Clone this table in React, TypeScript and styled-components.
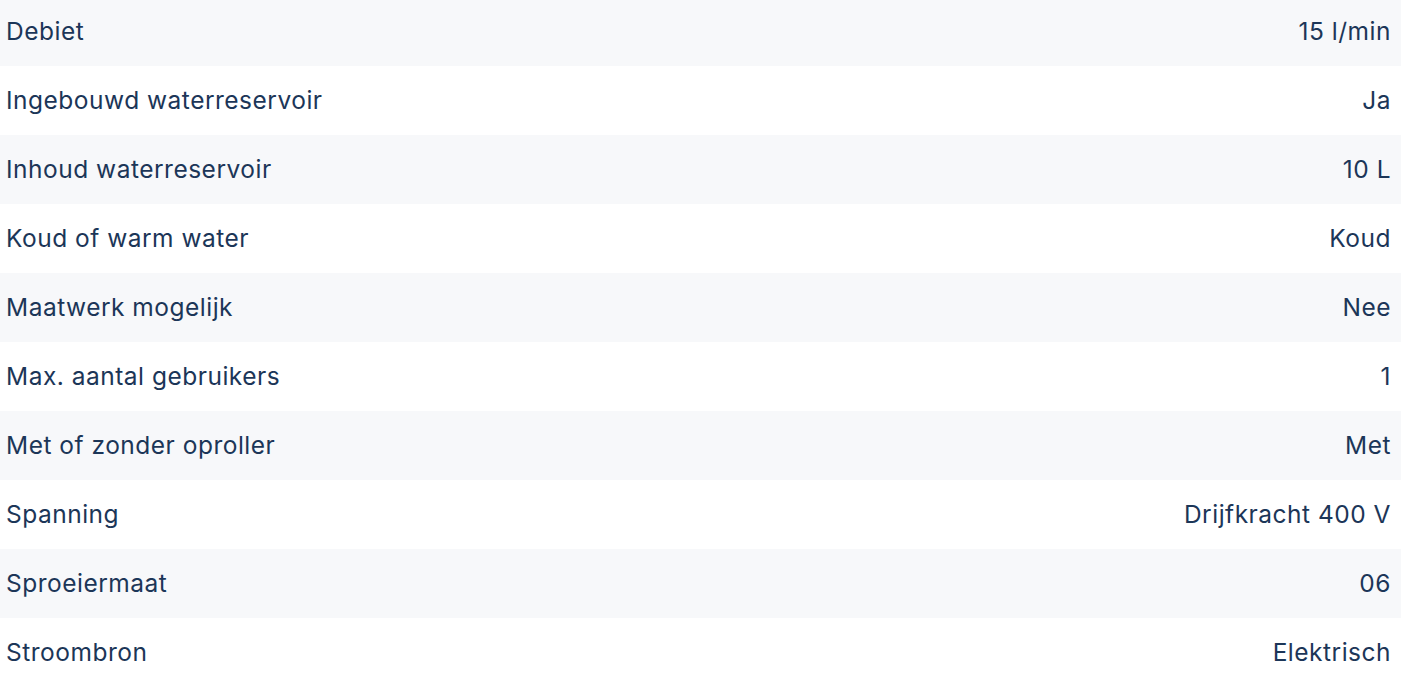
import React from "react";
import styled, { createGlobalStyle } from "styled-components";

const specs: [string, string][] = [
  ["Debiet", "15 l/min"],
  ["Ingebouwd waterreservoir", "Ja"],
  ["Inhoud waterreservoir", "10 L"],
  ["Koud of warm water", "Koud"],
  ["Maatwerk mogelijk", "Nee"],
  ["Max. aantal gebruikers", "1"],
  ["Met of zonder oproller", "Met"],
  ["Spanning", "Drijfkracht 400 V"],
  ["Sproeiermaat", "06"],
  ["Stroombron", "Elektrisch"],
];

const App: React.FC = () => {
  return (
    <>
      <GlobalStyle />
      <SpecTable>
        {specs.map(([label, value], i) => (
          <SpecRow key={label} striped={i % 2 === 0}>
            <Label>{label}</Label>
            <Value>{value}</Value>
          </SpecRow>
        ))}
      </SpecTable>
    </>
  );
};
export default App;

const GlobalStyle = createGlobalStyle`
  body {
    margin: 0;
    background: #ffffff;
    overflow: hidden;
  }
`;

const SpecTable = styled.div`
  width: 1401px;
  display: flex;
  flex-direction: column;
  margin-top: -3px;
`;

const SpecRow = styled.div<{ striped?: boolean }>`
  height: 69px;
  display: flex;
  align-items: center;
  justify-content: space-between;
  padding: 0 10px 2px 6px;
  box-sizing: border-box;
  background: ${(props) => (props.striped ? "#f7f8fa" : "#ffffff")};
  font-family: Inter, "Noto Sans", sans-serif;
  font-size: 24.5px;
  font-weight: 400;
  letter-spacing: 0.5px;
  color: #1c3658;
`;

const Label = styled.span`
  white-space: nowrap;
`;

const Value = styled.span`
  white-space: nowrap;
  text-align: right;
`;
